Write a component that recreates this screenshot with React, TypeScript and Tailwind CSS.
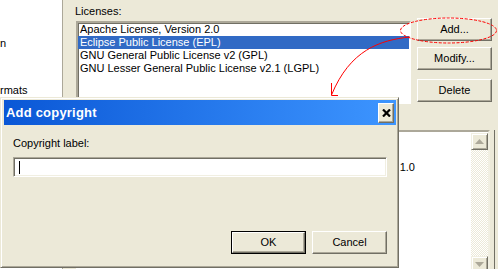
import React from "react";

function XPButton({ label, isDefault = false }: { label: string; isDefault?: boolean }) {
  if (isDefault) {
    return (
      <div className="w-[75px] h-[23px] border border-black">
        <div className="w-full h-full flex items-center justify-center bg-[#ECE9D8] border border-t-white border-l-white border-r-[#716F64] border-b-[#716F64] shadow-[inset_-1px_-1px_0_#ACA899]">
          {label}
        </div>
      </div>
    );
  }
  return (
    <div className="w-[75px] h-[23px] flex items-center justify-center bg-[#ECE9D8] border border-t-white border-l-white border-r-[#716F64] border-b-[#716F64] shadow-[inset_-1px_-1px_0_#ACA899]">
      {label}
    </div>
  );
}

function ScrollArrow({ up }: { up: boolean }) {
  return (
    <div className="w-[17px] h-[17px] flex items-center justify-center bg-[#ECE9D8] border border-t-[#F1EFE2] border-l-[#F1EFE2] border-r-[#716F64] border-b-[#716F64] shadow-[inset_1px_1px_0_#fff,inset_-1px_-1px_0_#ACA899]">
      <svg width="9" height="5" viewBox="0 0 9 5">
        {up ? <polygon points="4.5,0 9,5 0,5" fill="#ACA899" /> : <polygon points="0,0 9,0 4.5,5" fill="#ACA899" />}
      </svg>
    </div>
  );
}

export default function App() {
  const licenses = [
    "Apache License, Version 2.0",
    "Eclipse Public License (EPL)",
    "GNU General Public License v2 (GPL)",
    "GNU Lesser General Public License v2.1 (LGPL)",
  ];
  return (
    <div className="relative w-[498px] h-[269px] overflow-hidden bg-[#ECE9D8] flex font-['Liberation_Sans',Arial,sans-serif] text-[11px] leading-[13px] text-black">
      {/* left white pane */}
      <div className="w-[63px] h-full shrink-0 bg-white border-r border-[#ACA899] overflow-hidden">
        <div className="mt-[37px] whitespace-nowrap">n</div>
        <div className="mt-[34px] whitespace-nowrap">rmats</div>
      </div>

      {/* right panel */}
      <div className="flex-1 flex flex-col pl-[13px] pt-[5px]">
        <div className="ml-[-1px] h-[13px]">Licenses:</div>
        <div className="flex items-start mt-[3px]">
          <div className="w-[335px] h-[83px] bg-white border-2 border-t-[#ACA899] border-l-[#ACA899] border-r-white border-b-white shadow-[inset_1px_1px_0_#716F64]">
            {licenses.map((l, i) => (
              <div
                key={l}
                className={
                  i === 1
                    ? "h-[13px] pl-[2px] whitespace-nowrap bg-[#316AC5] text-white"
                    : "h-[13px] pl-[2px] whitespace-nowrap"
                }
              >
                {l}
              </div>
            ))}
          </div>
          <div className="ml-[6px] mt-[-3px] flex flex-col">
            <XPButton label="Add..." />
            <div className="mt-[6px]">
              <XPButton label="Modify..." />
            </div>
            <div className="mt-[9px]">
              <XPButton label="Delete" />
            </div>
          </div>
        </div>

        {/* lower text area */}
        <div className="mt-[26px] w-[419px] h-[144px] shrink-0 flex border-r border-[#716F64] pr-[4px]">
          <div className="flex-1 flex bg-white border-t-2 border-r-2 border-t-[#ACA899] border-r-[#F1EFE2]">
            <div className="flex-1 overflow-hidden">
              <div className="mt-[29px] w-[339px] text-right whitespace-nowrap">Eclipse Public License - v 1.0</div>
            </div>
            <div className="w-[17px] mt-[1px] h-[140px] flex flex-col bg-[repeating-conic-gradient(#ECE9D8_0%_25%,#FFFFFF_0%_50%)] bg-[length:2px_2px]">
              <ScrollArrow up={true} />
              <div className="flex-1" />
              <ScrollArrow up={false} />
            </div>
          </div>
        </div>
      </div>

      {/* dialog */}
      <div className="absolute left-0 top-[97px] w-[399px] h-[171px] flex flex-col bg-[#ECE9D8] border border-t-[#ECE9D8] border-l-[#ECE9D8] border-r-[#716F64] border-b-[#716F64] shadow-[inset_1px_1px_0_#fff,inset_-1px_-1px_0_#ACA899] pt-[2px] pl-[3px] pr-[2px]">
        <div className="h-[25px] flex items-center bg-gradient-to-r from-[#0A57D6] to-[#3D95FF] pl-[2px]">
          <span className="text-white font-bold text-[13px] leading-[15px] tracking-[0.2px]">Add copyright</span>
          <div className="ml-auto mr-[2px] w-[16px] h-[20px] flex items-center justify-center bg-[#ECE9D8] border border-t-white border-l-white border-r-[#716F64] border-b-[#716F64] shadow-[inset_-1px_-1px_0_#ACA899]">
            <svg width="9" height="8" viewBox="0 0 9 8">
              <path d="M1 0.5 L8 7.5 M8 0.5 L1 7.5" stroke="#000" strokeWidth="2.2" />
            </svg>
          </div>
        </div>
        <div className="flex flex-col px-[9px]">
          <div className="mt-[12px] h-[13px]">Copyright label:</div>
          <div className="mt-[7px] h-[20px] bg-white flex items-center border border-t-[#ACA899] border-l-[#ACA899] border-r-white border-b-white shadow-[inset_1px_1px_0_#716F64,inset_-1px_-1px_0_#F1EFE2]">
            <div className="ml-[5px] w-[1px] h-[13px] bg-black" />
          </div>
          <div className="mt-[54px] flex justify-end gap-[6px]">
            <XPButton label="OK" isDefault={true} />
            <XPButton label="Cancel" />
          </div>
        </div>
      </div>

      {/* annotation overlay */}
      <svg className="absolute left-0 top-0 pointer-events-none" width="498" height="269" viewBox="0 0 498 269">
        <ellipse cx="448.5" cy="30.5" rx="48" ry="12.5" fill="none" stroke="#FF0000" strokeWidth="1" strokeDasharray="3 1.5" />
        <path d="M410 37 C380 40 350 50 331.5 95" fill="none" stroke="#FF0000" strokeWidth="1" />
        <polyline points="331.5,83 331.5,95.5 338,95.5" fill="none" stroke="#FF0000" strokeWidth="1" />
      </svg>
    </div>
  );
}
